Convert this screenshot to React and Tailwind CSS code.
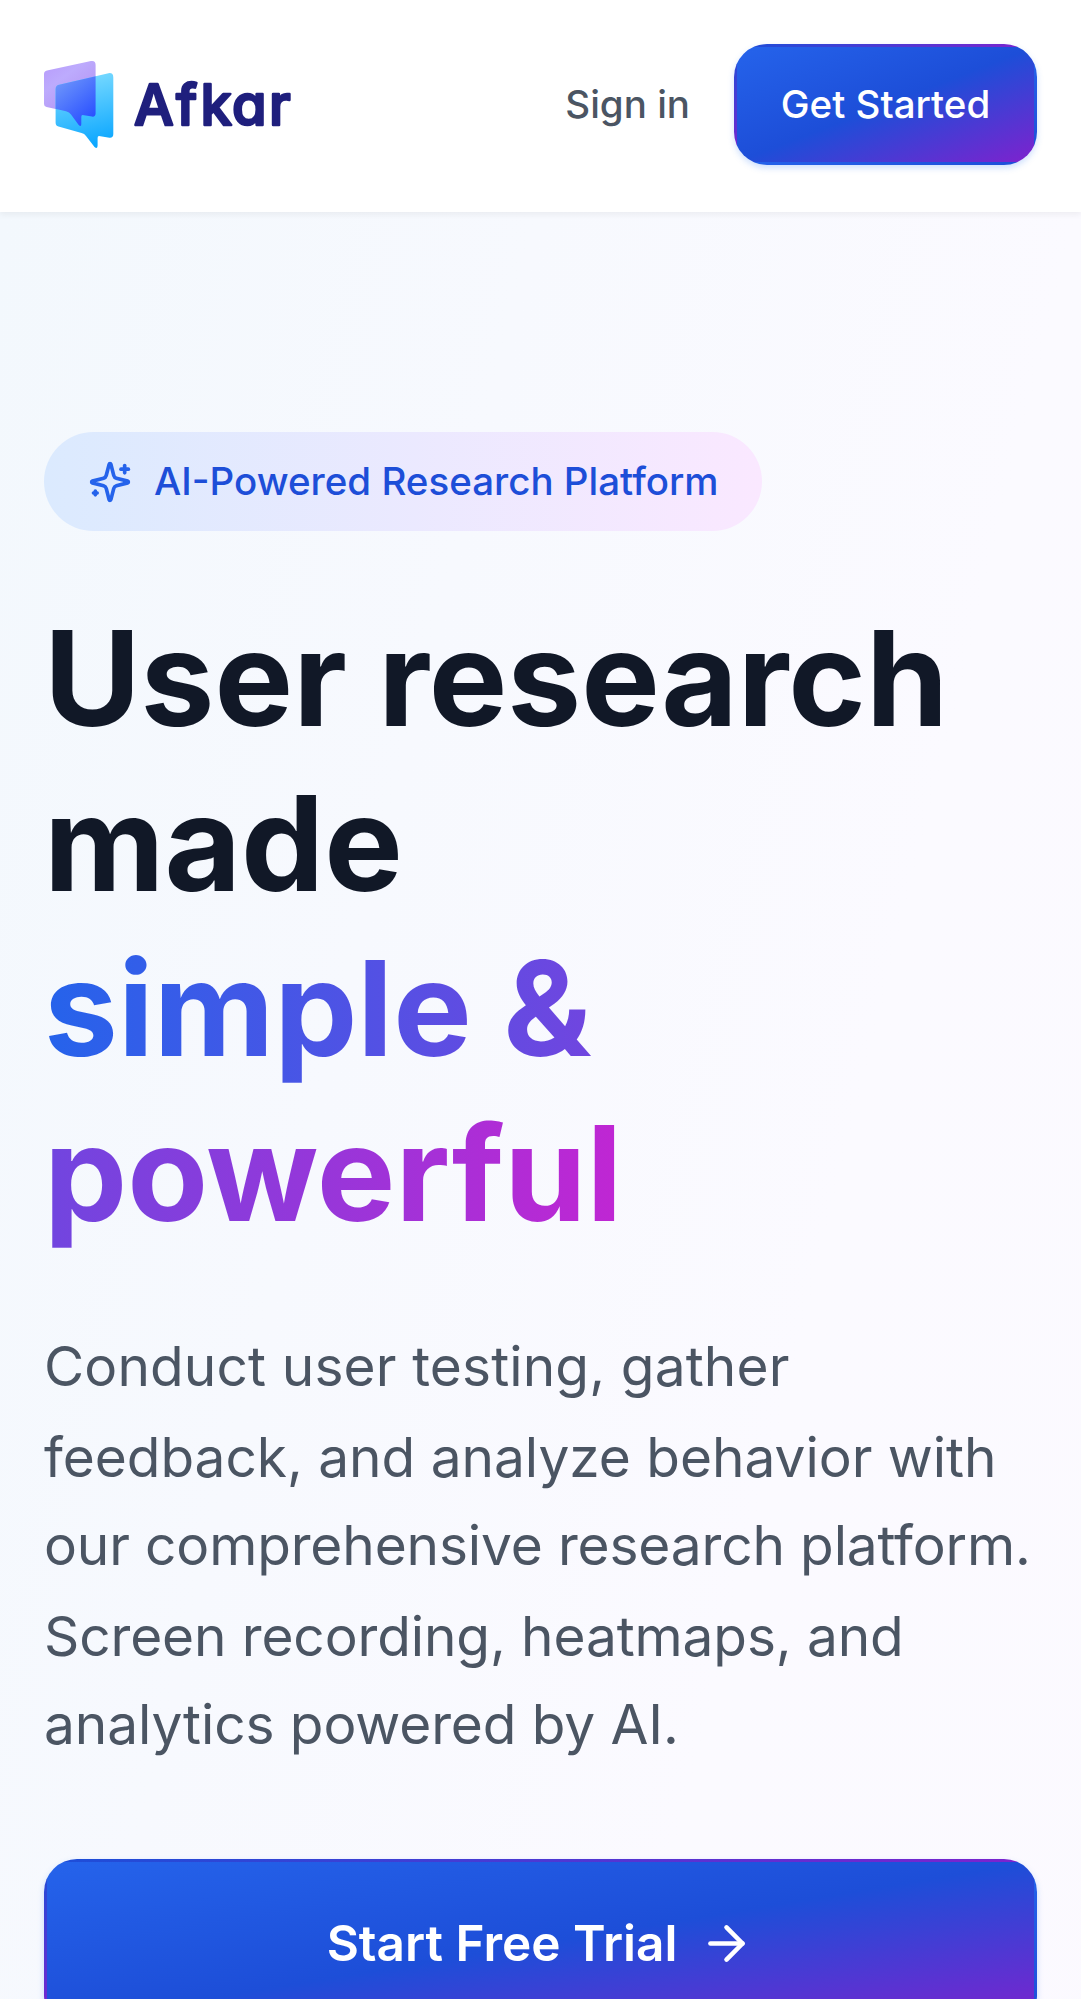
import { ArrowRight } from "lucide-react";

const PURPLE =
  "M47 70.6 L91 61 Q95.6 60.2 95.6 65 V113.5 Q95.6 117 92 116.6 L82.5 115 Q81.3 115 81.3 117 V124 Q81.3 127.5 78.5 124.8 L71 114.5 Q69.5 112 66 111.3 L46.5 107 Q44 106.4 44 104 V74 Q44 71.3 47 70.6 Z";
const CYAN =
  "M59 84.8 L108.500 73.200 Q113.300 72.500 113.300 77.500 V134 Q113.300 138 109.500 137.700 L99 136 Q97.600 136 97.600 138 V145.500 Q97.600 149.500 94.500 147 L86 136 Q84.500 133.500 81.500 133 L58.500 126.600 Q55.600 126 55.600 122.500 V89 Q55.600 85.600 59 84.800 Z";

function Logo() {
  return (
    <svg className="block h-[121px] w-[250px]" viewBox="44 44 250 121" role="img" aria-label="Afkar">
      <defs>
        <linearGradient id="purple" x1="0" y1="0" x2="0.6" y2="1">
          <stop offset="0" stopColor="#b79afb" />
          <stop offset="0.35" stopColor="#bdabfd" />
          <stop offset="1" stopColor="#b08cf0" />
        </linearGradient>
        <linearGradient id="cyan" x1="0.4" y1="0" x2="0.6" y2="1">
          <stop offset="0" stopColor="#7ddcff" />
          <stop offset="1" stopColor="#0aa6ff" />
        </linearGradient>
        <linearGradient id="overlap" gradientUnits="userSpaceOnUse" x1="58" y1="82" x2="90" y2="120">
          <stop offset="0" stopColor="#6d95fb" />
          <stop offset="1" stopColor="#2a50ff" />
        </linearGradient>
        <clipPath id="bubble">
          <path d={CYAN} />
        </clipPath>
      </defs>
      <path d={PURPLE} fill="url(#purple)" />
      <path d={CYAN} fill="url(#cyan)" />
      <path d={PURPLE} fill="url(#overlap)" clipPath="url(#bubble)" />
      <text
        x="134 176 200.500 232 269"
        y="125"
        className="fill-[#1f1f7d] stroke-[#1f1f7d] stroke-[2.5px] font-['Inter'] text-[56px] font-medium [font-feature-settings:'cv11'] [stroke-linejoin:round]"
      >
        Afkar
      </text>
    </svg>
  );
}

function Sparkles() {
  return (
    <svg
      className="size-[44px] shrink-0 text-[#2563eb]"
      viewBox="0 0 24 24"
      fill="none"
      stroke="currentColor"
      strokeWidth="2"
      strokeLinecap="round"
      strokeLinejoin="round"
    >
      <path d="M9.937 15.5A2 2 0 0 0 8.500 14.063l-6.135-1.582a.5.5 0 0 1 0-.962L8.500 9.936A2 2 0 0 0 9.937 8.500l1.582-6.135a.5.5 0 0 1 .963 0L14.063 8.500A2 2 0 0 0 15.500 9.937l6.135 1.581a.5.5 0 0 1 0 .964L15.500 14.063a2 2 0 0 0-1.437 1.437l-1.582 6.135a.5.5 0 0 1-.963 0z" />
      <path d="M20 3v4" />
      <path d="M22 5h-4" />
      <path d="M4 17v2" />
      <path d="M5 18H3" />
    </svg>
  );
}

const GRADIENT_BUTTON =
  "flex items-center justify-center rounded-[33px] border-[3px] border-transparent bg-[linear-gradient(to_bottom_right,#2563eb,#1d4ed8,#7e22ce)] text-white shadow-[0_3px_6px_rgba(59,130,246,0.25)]";

export default function App() {
  return (
    <div className="h-[1999px] overflow-hidden bg-white font-['Inter',sans-serif]">
      <header className="relative flex h-[212px] items-start justify-between bg-white px-[44px] pt-[44px] shadow-[0_3px_6px_rgba(0,0,0,0.05)]">
        <Logo />
        <div className="flex items-center gap-[44px]">
          <a className="text-[38.5px] font-medium text-[#4b5563]">Sign in</a>
          <button className={`${GRADIENT_BUTTON} h-[121px] w-[303px] text-[38.5px] font-medium`}>
            Get Started
          </button>
        </div>
      </header>
      <main className="h-[4400px] bg-[linear-gradient(to_bottom_right,#f3f8fd,#fbfaff_50%,#fcf9ff)] px-[44px] pt-[220px]">
        <div className="flex h-[99px] w-[718px] items-center gap-[22px] rounded-full bg-[linear-gradient(to_right,#dbeafe,#fae8ff)] px-[44px]">
          <Sparkles />
          <span className="whitespace-nowrap text-[38.5px] font-medium text-[#1d4ed8]">
            AI-Powered Research Platform
          </span>
        </div>
        <h1 className="mt-[65px] text-[132px] leading-[165px] font-bold text-[#111827]">
          User research made
          <br />
          <span className="bg-[linear-gradient(to_right,#2563eb,#c026d3)] bg-clip-text text-transparent">
            simple & powerful
          </span>
        </h1>
        <p className="mt-[66px] text-[55px] leading-[89px] whitespace-nowrap text-[#4b5563]">
          <span className="block h-[91px] tracking-[0.13px]">Conduct user testing, gather </span>
          <span className="block h-[88px] tracking-[-0.03px]">feedback, and analyze behavior with </span>
          <span className="block h-[91px] tracking-[-0.15px]">our comprehensive research platform. </span>
          <span className="block h-[88px] tracking-[-0.12px]">Screen recording, heatmaps, and </span>
          <span className="block h-[89px] tracking-[-0.1px]">analytics powered by AI.</span>
        </p>
        <button className={`${GRADIENT_BUTTON} mt-[90px] h-[169px] w-full gap-[22px] text-[49.5px] font-semibold`}>
          Start Free Trial
          <ArrowRight className="size-[55px]" />
        </button>
      </main>
    </div>
  );
}
